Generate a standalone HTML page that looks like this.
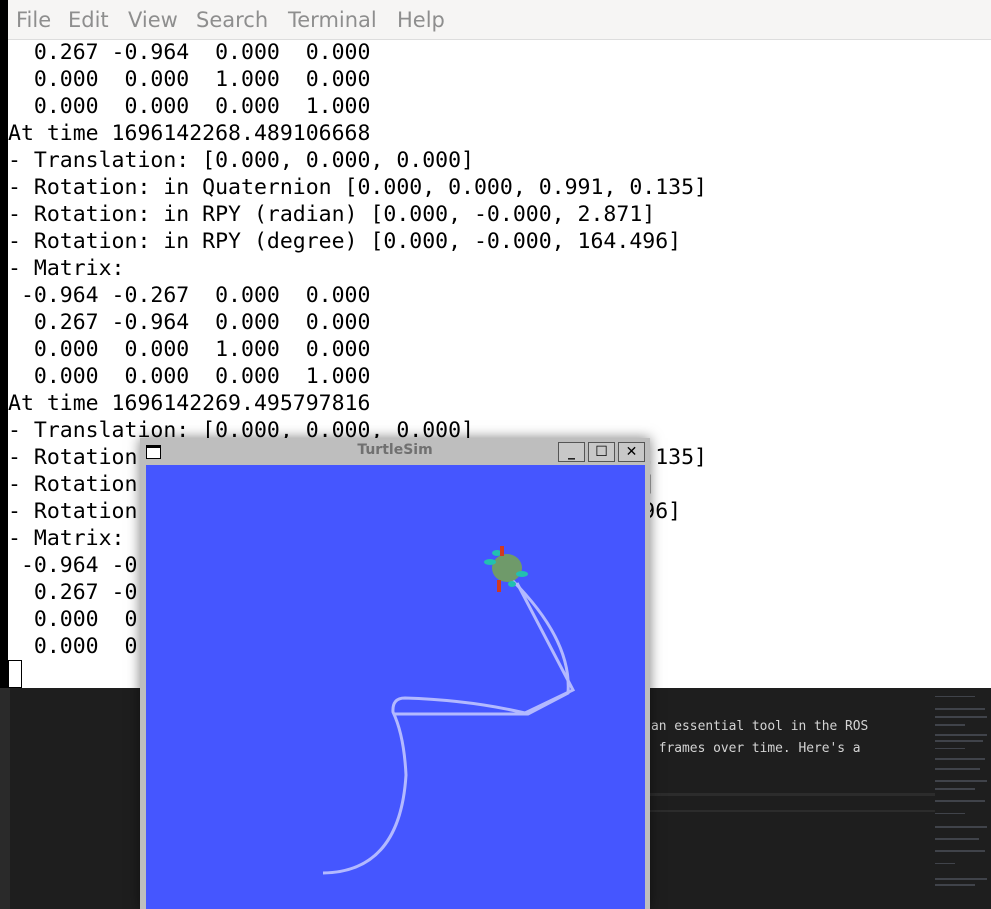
<!DOCTYPE html>
<html><head><style>
html,body{margin:0;width:991px;height:909px;overflow:hidden}
body{position:relative;background:#1e1e1e;font-family:"DejaVu Sans Mono","Liberation Mono",monospace}
.menu{position:absolute;left:8px;top:0;width:983px;height:39px;background:#f6f5f4;border-bottom:1px solid #ddd;font-family:"DejaVu Sans","Liberation Sans",sans-serif;font-size:21px;color:#8e8e8e}
.menu span{position:absolute;top:8px}
.term{position:absolute;left:8px;top:40px;width:983px;height:648px;background:#fff}
pre{margin:0;position:absolute;left:8px;top:39px;font-size:21.5px;line-height:27px;color:#000;font-family:"DejaVu Sans Mono",monospace}
.strip{position:absolute;left:0;top:0;width:8px;height:688px;background:#000}
.cur{position:absolute;left:8px;top:660px;width:12px;height:26px;border:1px solid #000;background:#fff}
.win{position:absolute;left:140px;top:438px;width:510px;height:471px;background:#bebebe;box-shadow:0 0 12px rgba(0,0,0,.5)}
.canvas{position:absolute;left:6px;top:27px;width:499px;height:444px;background:#4556ff}
.title{position:absolute;left:0;width:100%;top:4px;text-align:center;font:bold 14px "DejaVu Sans",sans-serif;color:#707070}
.btn{position:absolute;top:4px;width:25px;height:18px;border:1px solid #555;background:#c8c8c8;font:bold 14px "DejaVu Sans",sans-serif;text-align:center;line-height:18px;color:#000}
.ed{position:absolute;left:651px;top:716px;font-size:12.9px;line-height:22px;color:#d4d4d4;white-space:pre}
</style></head><body>
<div class="strip"></div>
<div class="menu"><span style="left:8px">File</span><span style="left:60px">Edit</span><span style="left:120px">View</span><span style="left:188px">Search</span><span style="left:280px">Terminal</span><span style="left:389px">Help</span></div>
<div class="term"></div>
<pre>  0.267 -0.964  0.000  0.000
  0.000  0.000  1.000  0.000
  0.000  0.000  0.000  1.000
At time 1696142268.489106668
- Translation: [0.000, 0.000, 0.000]
- Rotation: in Quaternion [0.000, 0.000, 0.991, 0.135]
- Rotation: in RPY (radian) [0.000, -0.000, 2.871]
- Rotation: in RPY (degree) [0.000, -0.000, 164.496]
- Matrix:
 -0.964 -0.267  0.000  0.000
  0.267 -0.964  0.000  0.000
  0.000  0.000  1.000  0.000
  0.000  0.000  0.000  1.000
At time 1696142269.495797816
- Translation: [0.000, 0.000, 0.000]
- Rotation: in Quaternion [0.000, 0.000, 0.991, 0.135]
- Rotation: in RPY (radian) [0.000, -0.000, 2.871]
- Rotation: in RPY (degree) [0.000, -0.000, 164.496]
- Matrix:
 -0.964 -0.267  0.000  0.000
  0.267 -0.964  0.000  0.000
  0.000  0.000  1.000  0.000
  0.000  0.000  0.000  1.000</pre>
<div class="cur"></div>
<div style="position:absolute;left:0;top:688px;width:991px;height:221px;background:#1e1e1e"></div>
<div style="position:absolute;left:0;top:688px;width:10px;height:221px;background:#2a2a2a"></div>
<div style="position:absolute;left:650px;top:793px;width:285px;height:3px;background:#2c2c2c"></div>
<div style="position:absolute;left:650px;top:810px;width:285px;height:2px;background:#2c2c2c"></div>
<div class="ed">an essential tool in the ROS
 frames over time. Here's a</div>
<svg style="position:absolute;left:935px;top:688px" width="56" height="221">
<g fill="#6a7080" opacity=".45">
<rect x="0" y="8" width="40" height="1"/><rect x="0" y="20" width="50" height="2"/><rect x="0" y="28" width="52" height="2"/><rect x="0" y="36" width="30" height="2"/><rect x="0" y="46" width="52" height="2"/><rect x="0" y="52" width="48" height="2"/><rect x="0" y="60" width="30" height="1"/><rect x="0" y="70" width="50" height="2"/><rect x="0" y="80" width="45" height="2"/><rect x="0" y="92" width="52" height="2"/><rect x="0" y="100" width="40" height="2"/><rect x="0" y="112" width="50" height="2"/><rect x="0" y="125" width="30" height="1"/><rect x="0" y="138" width="52" height="2"/><rect x="0" y="150" width="44" height="2"/><rect x="0" y="162" width="50" height="2"/><rect x="0" y="175" width="20" height="1"/><rect x="0" y="190" width="52" height="2"/><rect x="0" y="196" width="40" height="2"/></g></svg>
<div class="win">
<div style="position:absolute;left:6px;top:7px;width:13px;height:10px;border:1px solid #000;border-top-width:3px;background:#fff"></div>
<div class="title">TurtleSim</div>
<div class="btn" style="left:418px">_</div>
<div class="btn" style="left:448px">☐</div>
<div class="btn" style="left:478px">✕</div>
<div class="canvas"></div>
</div>
<svg style="position:absolute;left:0;top:0" width="991" height="909">
<g fill="none" stroke="#b3b9ff" stroke-width="3">
<path d="M323 873 Q400 872 406 775 Q404 735 393 712 Q392 698 405 698 Q470 700 525 713 L573 690 L517 583"/>
<path d="M395 714 L528 714 L568 693 Q572 640 512 580"/>
</g>
<g>
<ellipse cx="507" cy="568" rx="15" ry="14" fill="#6f9a6a"/>
<ellipse cx="490" cy="562" rx="6" ry="3" fill="#22c0b0"/>
<ellipse cx="522" cy="574" rx="6" ry="3" fill="#22c0b0"/>
<ellipse cx="497" cy="553" rx="5" ry="3" fill="#22c0b0"/>
<ellipse cx="512" cy="584" rx="4" ry="3" fill="#22c0b0"/>
<rect x="500" y="546" width="4" height="10" fill="#d03a20"/>
<rect x="497" y="580" width="4" height="12" fill="#d03a20"/>
</g>
</svg>
</body></html>
